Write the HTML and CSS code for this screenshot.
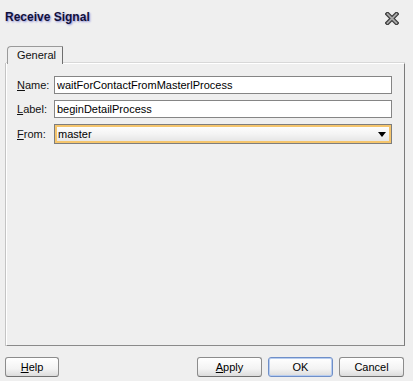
FILE: index.html
```html
<!DOCTYPE html>
<html>
  <head>
    <title>Receive Signal</title>
    <link rel="stylesheet" href="styles.css">
  </head>
  <body>
    <div class="dialog">
      <div class="titlebar">
        <h1 class="title">Receive Signal</h1>
        <button class="close-btn" title="Close">
          <svg viewBox="0 0 14 13" width="14" height="13">
            <path d="M2.5 2 L11.5 11 M11.5 2 L2.5 11" stroke="#3a3a3a" stroke-width="4.2" stroke-linecap="square" />
            <path d="M2.5 2 L11.5 11 M11.5 2 L2.5 11" stroke="#a8a8a8" stroke-width="1.8" stroke-linecap="square" />
          </svg>
        </button>
      </div>

      <div class="tabs">
        <div class="tab active">General</div>
      </div>

      <div class="panel">
        <div class="form">
          <label class="field-label"><u>N</u>ame:</label>
          <input class="text-input" type="text" value="waitForContactFromMasterlProcess" />

          <label class="field-label"><u>L</u>abel:</label>
          <input class="text-input" type="text" value="beginDetailProcess" />

          <label class="field-label"><u>F</u>rom:</label>
          <div class="combo">
            <span class="combo-value">master</span>
            <span class="combo-arrow"></span>
          </div>
        </div>
      </div>

      <div class="buttons">
        <button class="btn"><u>H</u>elp</button>
        <div class="spacer"></div>
        <button class="btn"><u>A</u>pply</button>
        <button class="btn default">OK</button>
        <button class="btn">Cancel</button>
      </div>
    </div>
  </body>
</html>
```

FILE: styles.css
```css
* {
  margin: 0;
  padding: 0;
  box-sizing: border-box;
}

body {
  font-family: "Liberation Sans", Arial, sans-serif;
  font-size: 11px;
  background-color: #efefef;
  color: #000;
  width: 413px;
  height: 381px;
  overflow: hidden;
}

.dialog {
  width: 413px;
  height: 381px;
  display: flex;
  flex-direction: column;
}

.titlebar {
  display: flex;
  justify-content: space-between;
  align-items: flex-start;
  padding: 10px 14px 0 5px;
  height: 46px;
}

.title {
  font-size: 12px;
  font-weight: bold;
  line-height: 14px;
  color: #10103a;
  text-shadow: 1px 1px 2px #8c8cd8;
}

.close-btn {
  border: none;
  background: none;
  width: 14px;
  height: 13px;
  margin-top: 2px;
  display: flex;
}

.tabs {
  display: flex;
  padding-left: 7px;
  height: 17px;
}

.tab {
  width: 56px;
  height: 18px;
  border: 1px solid #9a9a9a;
  border-bottom: none;
  border-right-color: #6e6e6e;
  border-top-left-radius: 4px;
  background: #efefef;
  text-align: center;
  line-height: 16px;
  padding-left: 3px;
  color: #111;
  position: relative;
  z-index: 1;
}

.panel {
  margin: 0 8px 0 6px;
  height: 283px;
  border: 1px solid;
  border-color: #fff #7a7a7a #8a8a8a #fff;
  box-shadow: -1px 0 0 #c4c4c4, 0 -1px 0 #d8d8d8;
  padding: 12px 12px 0 10px;
}

.form {
  display: grid;
  grid-template-columns: 37px 1fr;
  row-gap: 6px;
  align-items: center;
}

.field-label {
  line-height: 18px;
  color: #111;
}

.text-input {
  height: 18px;
  border: 1px solid #858585;
  background: #fff;
  font-family: "Liberation Sans", Arial, sans-serif;
  font-size: 11px;
  padding: 0 2px;
  color: #000;
  outline: none;
}

.combo {
  height: 20px;
  border: 1px solid #7d7d7d;
  box-shadow: inset 0 0 0 2px #f5c56c;
  background: linear-gradient(#ffffff, #f4f4f4 50%, #e2e2e2);
  display: flex;
  align-items: center;
  justify-content: space-between;
  padding: 0 5px 0 3px;
}

.combo-arrow {
  width: 0;
  height: 0;
  border-left: 4px solid transparent;
  border-right: 4px solid transparent;
  border-top: 5px solid #000;
  margin-top: 1px;
}

.buttons {
  display: flex;
  gap: 6px;
  padding: 11px 9px 0 5px;
}

.spacer {
  flex: 1;
}

.btn {
  width: 54px;
  height: 20px;
  border: 1px solid #8c8c8c;
  border-bottom-color: #707070;
  border-radius: 3px;
  background: linear-gradient(#ffffff, #f3f3f3 60%, #dcdcdc);
  font-family: "Liberation Sans", Arial, sans-serif;
  font-size: 11px;
  color: #000;
}

.buttons .btn:not(:first-child) {
  width: 65px;
}

.btn.default {
  width: 64px;
  border-color: #6f8fc8;
  box-shadow: inset 0 0 0 1px #b8cdf0;
}
```
